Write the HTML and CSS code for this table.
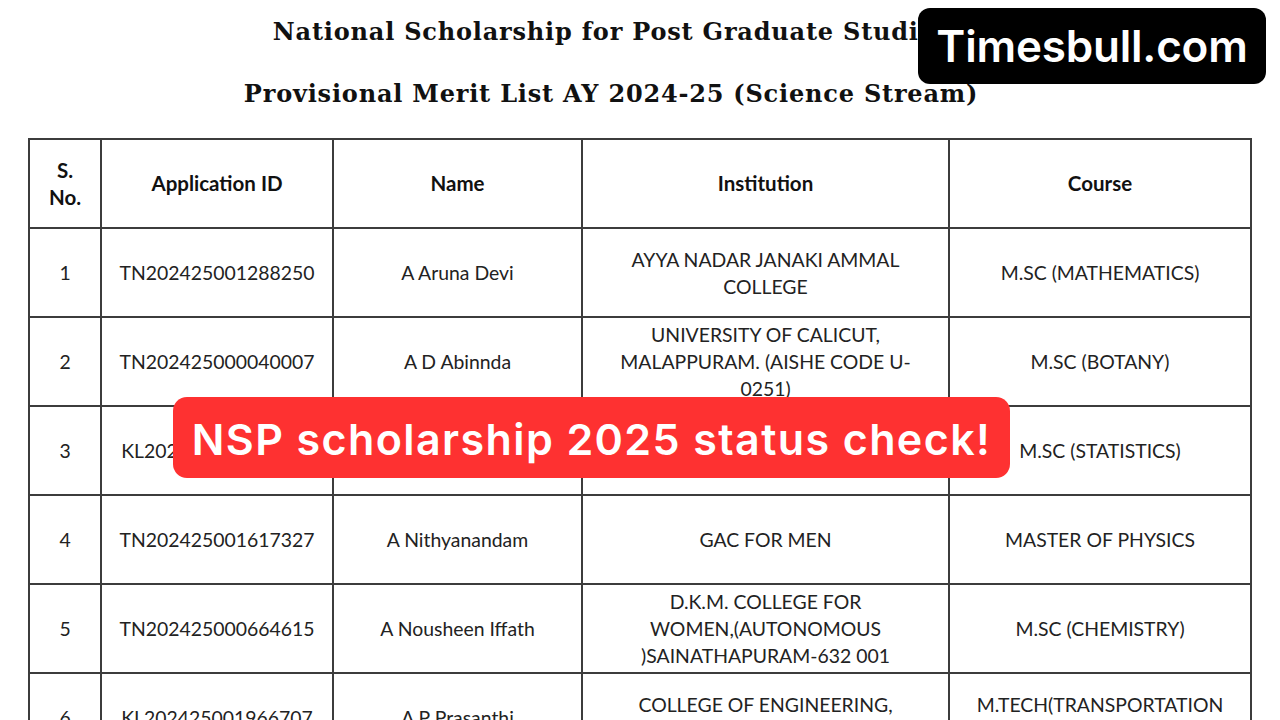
FILE: index.html
```html
<!DOCTYPE html>
<html lang="en">
<head>
<meta charset="utf-8">
<title>NSP scholarship 2025 status check</title>
<link rel="stylesheet" href="styles.css">
</head>
<body>
<div class="page">
  <header class="titles">
    <h1 class="title">National Scholarship for Post Graduate Studies</h1>
    <h2 class="title">Provisional Merit List AY 2024-25 (Science Stream)</h2>
  </header>

  <table class="merit">
    <colgroup>
      <col class="c-sno">
      <col class="c-id">
      <col class="c-name">
      <col class="c-inst">
      <col class="c-course">
    </colgroup>
    <thead>
      <tr>
        <th>S.<br>No.</th>
        <th>Application ID</th>
        <th>Name</th>
        <th>Institution</th>
        <th>Course</th>
      </tr>
    </thead>
    <tbody>
      <tr>
        <td>1</td>
        <td>TN202425001288250</td>
        <td>A Aruna Devi</td>
        <td>AYYA NADAR JANAKI AMMAL<br>COLLEGE</td>
        <td>M.SC (MATHEMATICS)</td>
      </tr>
      <tr>
        <td>2</td>
        <td>TN202425000040007</td>
        <td>A D Abinnda</td>
        <td>UNIVERSITY OF CALICUT,<br>MALAPPURAM. (AISHE CODE U-<br>0251)</td>
        <td>M.SC (BOTANY)</td>
      </tr>
      <tr>
        <td>3</td>
        <td>KL202425001455318</td>
        <td>A Fathima</td>
        <td>UNIVERSITY OF KERALA</td>
        <td>M.SC (STATISTICS)</td>
      </tr>
      <tr>
        <td>4</td>
        <td>TN202425001617327</td>
        <td>A Nithyanandam</td>
        <td>GAC FOR MEN</td>
        <td>MASTER OF PHYSICS</td>
      </tr>
      <tr>
        <td>5</td>
        <td>TN202425000664615</td>
        <td>A Nousheen Iffath</td>
        <td>D.K.M. COLLEGE FOR<br>WOMEN,(AUTONOMOUS<br>)SAINATHAPURAM-632 001</td>
        <td>M.SC (CHEMISTRY)</td>
      </tr>
      <tr>
        <td>6</td>
        <td>KL202425001966707</td>
        <td>A P Prasanthi</td>
        <td>COLLEGE OF ENGINEERING,<br>TRIVANDRUM</td>
        <td>M.TECH(TRANSPORTATION<br>ENGINEERING)</td>
      </tr>
    </tbody>
  </table>

  <div class="brand">Timesbull.com</div>
  <div class="banner">NSP scholarship 2025 status check!</div>
</div>
</body>
</html>
```

FILE: styles.css
```css
* {
  box-sizing: border-box;
}

html, body {
  margin: 0;
  padding: 0;
  background: #ffffff;
  width: 1280px;
  height: 720px;
  overflow: hidden;
}

.page {
  position: relative;
  width: 1280px;
  height: 720px;
  overflow: hidden;
  background: #ffffff;
}

.titles {
  padding: 1px 58px 0 0;
  text-align: center;
  margin-bottom: 13px;
}

.title {
  margin: 0;
  font-family: "DejaVu Serif", "Liberation Serif", serif;
  font-weight: bold;
  font-size: 24px;
  line-height: 62px;
  color: #111111;
  letter-spacing: 0.8px;
  white-space: nowrap;
}

.merit {
  border-collapse: collapse;
  table-layout: fixed;
  width: 1222px;
  margin-left: 28px;
  font-family: Lato, "Open Sans", sans-serif;
  font-size: 19.4px;
  color: #222222;
}

.c-sno { width: 72px; }
.c-id { width: 232px; }
.c-name { width: 249px; }
.c-inst { width: 367px; }
.c-course { width: 302px; }

.merit th,
.merit td {
  border: 2px solid #3c3c3c;
  text-align: center;
  vertical-align: middle;
  height: 89px;
  padding: 0 4px;
  line-height: 27px;
}

.merit th {
  font-weight: bold;
  font-size: 20.5px;
  color: #111;
}

.brand {
  position: absolute;
  left: 918px;
  top: 8px;
  width: 348px;
  height: 76px;
  border-radius: 12px;
  background: #000000;
  color: #ffffff;
  font-family: Inter, "Open Sans", sans-serif;
  font-weight: 600;
  font-size: 44px;
  line-height: 76px;
  text-align: center;
  letter-spacing: -0.2px;
}

.banner {
  position: absolute;
  left: 173px;
  top: 397px;
  width: 837px;
  height: 81px;
  padding-top: 3px;
  border-radius: 14px;
  background: #fe3131;
  color: #ffffff;
  font-family: Inter, "Open Sans", sans-serif;
  font-weight: 600;
  font-size: 43px;
  line-height: 78px;
  text-align: center;
  letter-spacing: 1.4px;
  white-space: nowrap;
}
```
